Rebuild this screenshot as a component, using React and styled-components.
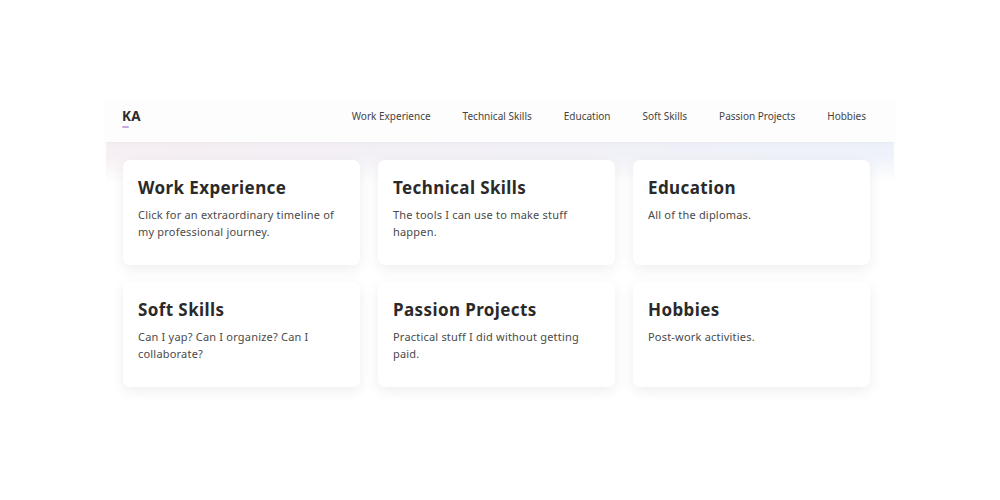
import React from 'react';
import styled, { createGlobalStyle } from 'styled-components';

const Global = createGlobalStyle`
  body {
    margin: 0;
    background: #ffffff;
    font-family: "Noto Sans", sans-serif;
  }
`;

const Page = styled.div`
  width: 1000px;
  height: 500px;
  padding-top: 100px;
  box-sizing: border-box;
`;

const Frame = styled.div`
  width: 788px;
  margin: 0 auto;
`;

const Header = styled.header`
  height: 42px;
  box-sizing: border-box;
  display: flex;
  align-items: center;
  justify-content: space-between;
  padding: 0 28px 10px 16px;
  background: #fdfdfd;
  position: relative;
  z-index: 1;
  box-shadow: 0 2px 6px rgba(0, 0, 0, 0.03);
`;

const Logo = styled.div`
  font-family: "Noto Sans", sans-serif;
  font-weight: 700;
  font-size: 13.5px;
  color: #2b2b2b;
  letter-spacing: 0.3px;
  position: relative;

  &::after {
    content: '';
    position: absolute;
    left: 0;
    bottom: -3px;
    width: 7px;
    height: 2px;
    border-radius: 1px;
    background: linear-gradient(to right, #f29bc4, #9db8f2);
  }
`;

const Nav = styled.nav`
  display: flex;
  gap: 32px;

  a {
    font-family: "Noto Sans", sans-serif;
    font-size: 10px;
    color: #444;
    text-decoration: none;
  }
`;

const Section = styled.section`
  background:
    linear-gradient(to bottom, rgba(255, 255, 255, 0) 0, rgba(255, 255, 255, 0) 14px, #fff 40px),
    linear-gradient(to right, #f6eff3, #eef2fa);
  padding: 18px 17px 18px;
`;

const Grid = styled.div`
  display: grid;
  grid-template-columns: repeat(3, 237px);
  column-gap: 18px;
  row-gap: 17px;
`;

const Card = styled.div`
  height: 105px;
  box-sizing: border-box;
  background: #fff;
  border-radius: 7px;
  padding: 16px 15px;
  box-shadow: 0 4px 14px rgba(0, 0, 0, 0.07);
  cursor: pointer;

  h2 {
    margin: 0 0 7px;
    font-family: "Noto Sans", sans-serif;
    font-weight: 700;
    font-size: 17px;
    letter-spacing: 0.4px;
    line-height: 24px;
    color: #2a2a2a;
  }

  p {
    margin: 0;
    font-family: "Noto Sans", sans-serif;
    font-size: 11px;
    letter-spacing: 0.2px;
    line-height: 16.5px;
    color: #4a4a4a;
  }
`;

const sections = [
  { title: 'Work Experience', text: 'Click for an extraordinary timeline of my professional journey.' },
  { title: 'Technical Skills', text: 'The tools I can use to make stuff happen.' },
  { title: 'Education', text: 'All of the diplomas.' },
  { title: 'Soft Skills', text: 'Can I yap? Can I organize? Can I collaborate?' },
  { title: 'Passion Projects', text: 'Practical stuff I did without getting paid.' },
  { title: 'Hobbies', text: 'Post-work activities.' },
];

const App = () => {
  return (
    <Page>
      <Global />
      <Frame>
        <Header>
          <Logo>KA</Logo>
          <Nav>
            { sections.map((s) => <a key={ s.title } href="#">{ s.title }</a>) }
          </Nav>
        </Header>
        <Section>
          <Grid>
            { sections.map((s) => (
              <Card key={ s.title }>
                <h2>{ s.title }</h2>
                <p>{ s.text }</p>
              </Card>
            )) }
          </Grid>
        </Section>
      </Frame>
    </Page>
  );
}

export default App;
